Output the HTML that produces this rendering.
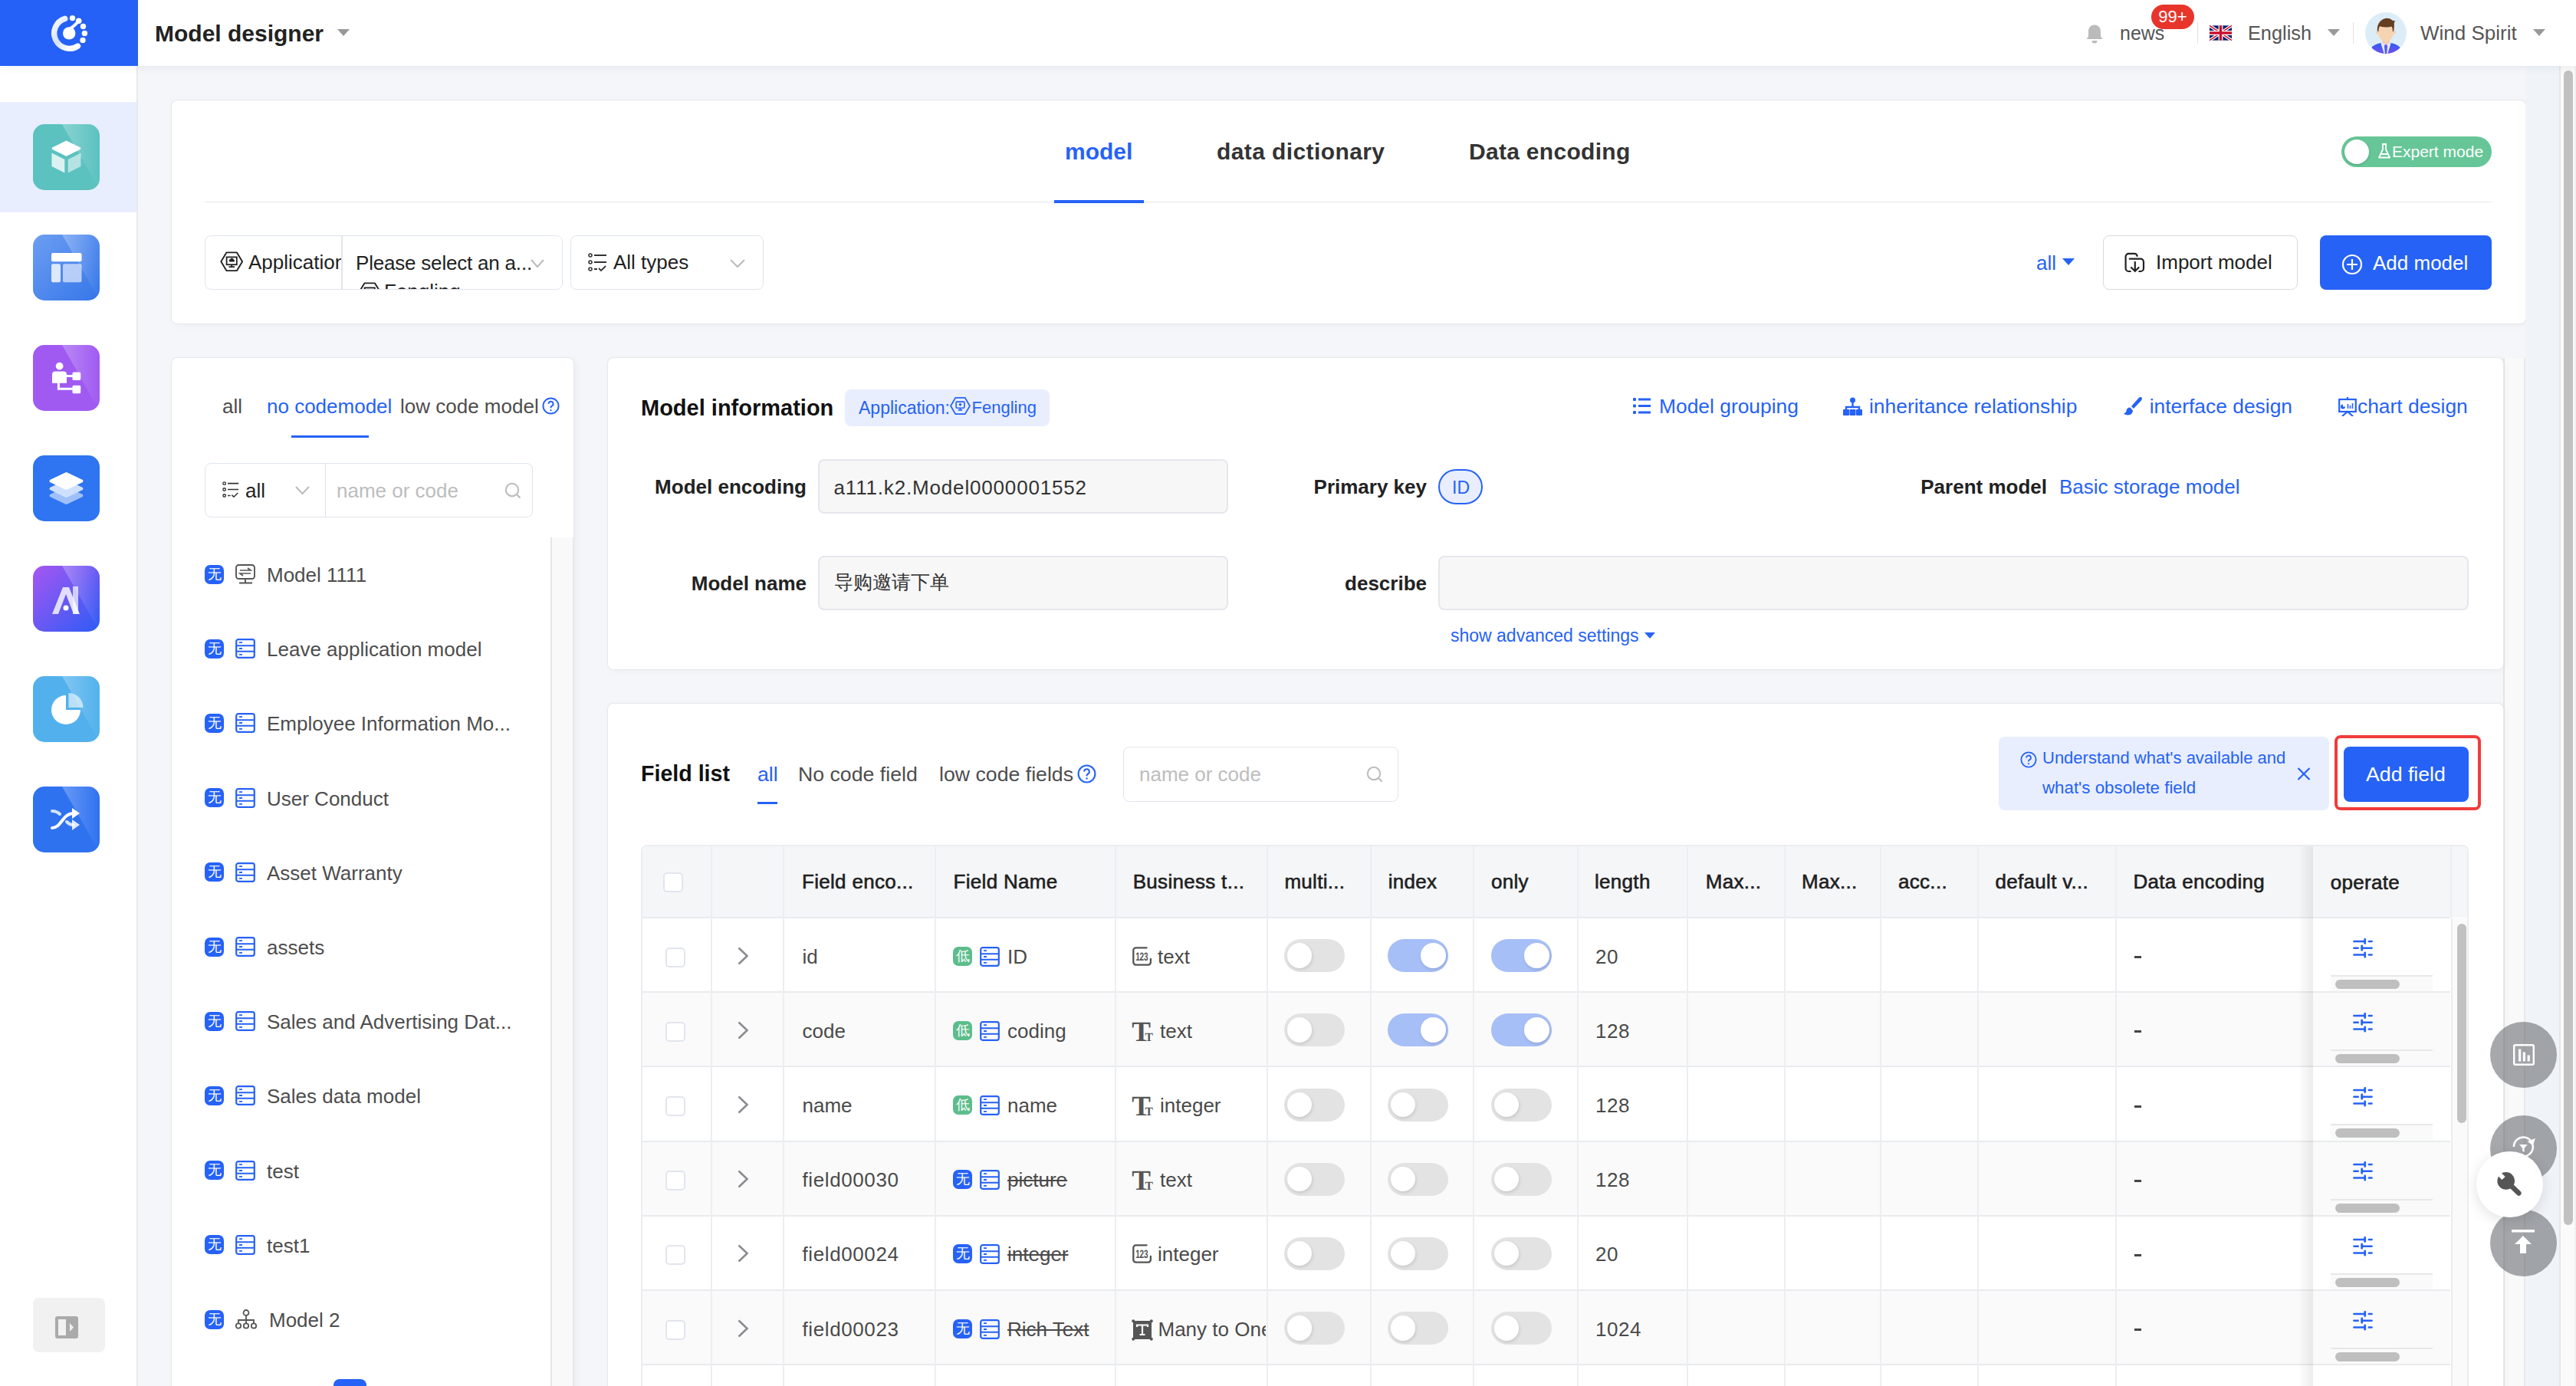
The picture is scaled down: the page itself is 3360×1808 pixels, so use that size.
<!DOCTYPE html>
<html><head><meta charset="utf-8">
<style>
*{box-sizing:border-box;margin:0;padding:0}
html,body{width:3360px;height:1808px;overflow:hidden;background:#f4f6f9;font-family:"Liberation Sans",sans-serif;color:#333}
.a{position:absolute}
.t{position:absolute;white-space:nowrap;line-height:1}
.blue{color:#2662f6}
svg{display:block}
</style></head><body>

<!-- HEADER -->
<div class="a" style="left:0;top:0;width:3360px;height:86px;background:#fff;box-shadow:0 3px 10px rgba(20,30,60,.06);z-index:5">
  <div class="a" style="left:0;top:0;width:180px;height:86px;background:#2561f6">
    <svg class="a" style="left:0;top:0" width="180" height="86" viewBox="0 0 180 86">
      <defs><linearGradient id="lg1" x1="0" y1="0" x2="1" y2="1"><stop offset="0" stop-color="#fff"/><stop offset=".45" stop-color="#d3e0fc"/><stop offset=".8" stop-color="#fff"/></linearGradient></defs>
      <path d="M84.78 24.37 A19.9 19.9 0 1 0 101.44 60.09" fill="none" stroke="url(#lg1)" stroke-width="7.4" stroke-linecap="round"/>
      <circle cx="90.2" cy="43.4" r="8.2" fill="#fff"/>
      <path d="M92 37 Q97 34 102.7 27.3" stroke="#fff" stroke-width="4" fill="none" stroke-linecap="round"/>
      <circle cx="102.7" cy="27.3" r="3.8" fill="#fff"/>
      <circle cx="94.5" cy="23.6" r="3.7" fill="#fff"/>
      <circle cx="108.5" cy="34.4" r="3.7" fill="#fff"/>
      <circle cx="110.4" cy="43.4" r="3.7" fill="#fff"/>
      <circle cx="108" cy="52.4" r="3.7" fill="#fff"/>
    </svg>
  </div>
  <div class="t" style="left:202px;top:29px;font-size:30px;font-weight:bold;color:#222">Model designer</div>
  <div class="a" style="left:440px;top:38px;width:0;height:0;border-left:8px solid transparent;border-right:8px solid transparent;border-top:9px solid #999"></div>

  <!-- right header -->
  <svg class="a" style="left:2720px;top:31px" width="24" height="26" viewBox="0 0 24 26"><path d="M12 1.5c-5 0-8 3.8-8 8.5v6.5L1.5 20h21L20 16.5V10c0-4.7-3-8.5-8-8.5z" fill="#bbb"/><path d="M8.5 22a3.5 3.5 0 0 0 7 0z" fill="#bbb"/></svg>
  <div class="t" style="left:2765px;top:30.8px;font-size:25px;color:#555">news</div>
  <div class="a" style="left:2806px;top:6px;width:56px;height:32px;border-radius:16px;background:#e8352c;color:#fff;font-size:22px;line-height:32px;text-align:center">99+</div>
  <div class="a" style="left:2866px;top:29px;width:1px;height:28px;background:#e2e2e2"></div>
  <svg class="a" style="left:2882px;top:33px" width="29" height="20" viewBox="0 0 60 40">
    <rect width="60" height="40" fill="#012169"/>
    <path d="M0 0L60 40M60 0L0 40" stroke="#fff" stroke-width="8"/>
    <path d="M0 0L60 40M60 0L0 40" stroke="#C8102E" stroke-width="3"/>
    <path d="M30 0v40M0 20h60" stroke="#fff" stroke-width="12"/>
    <path d="M30 0v40M0 20h60" stroke="#C8102E" stroke-width="7"/>
  </svg>
  <div class="t" style="left:2932px;top:30.6px;font-size:25.3px;color:#555">English</div>
  <div class="a" style="left:3036px;top:38px;width:0;height:0;border-left:8px solid transparent;border-right:8px solid transparent;border-top:9px solid #999"></div>
  <div class="a" style="left:3069px;top:29px;width:1px;height:28px;background:#e2e2e2"></div>
  <svg class="a" style="left:3085px;top:16px" width="54" height="54" viewBox="0 0 54 54">
    <defs><clipPath id="avc"><circle cx="27" cy="27" r="27"/></clipPath>
    <linearGradient id="jk" x1="0" y1="0" x2="0" y2="1"><stop offset="0" stop-color="#2c5cf2"/><stop offset="1" stop-color="#7d4df0"/></linearGradient></defs>
    <circle cx="27" cy="27" r="27" fill="#dcedf7"/>
    <g clip-path="url(#avc)">
      <path d="M8.5 46c3-4 9-5.5 13.5-6l5 2 5-2c4.5.5 10.5 2 13.5 6l-2 10H10z" fill="url(#jk)"/>
      <path d="M22 39.5l5 2.5 5-2.5 1.5 1.2-4 13h-5l-4-13z" fill="#e8e8ee"/>
      <path d="M26 42.5h2l1 2-1 10h-2l-1-10z" fill="#4a5cf2"/>
      <path d="M25.8 42.3h2.4l.6 2h-3.6z" fill="#7b4ff0"/>
      <rect x="22.3" y="35" width="9.6" height="6" rx="2" fill="#f2cda9"/>
      <ellipse cx="15.8" cy="26.3" rx="1.6" ry="2.3" fill="#f3cfac"/>
      <ellipse cx="38.2" cy="26.3" rx="1.6" ry="2.3" fill="#f3cfac"/>
      <path d="M17.3 20c0-3 4-4.5 9.7-4.5s9.7 1.5 9.7 4.5v8c0 5-5 10.5-9.7 10.5S17.3 33 17.3 28z" fill="#f5d4b3"/>
      <path d="M16 24.8c-1-7 2-13.5 8.5-16.3 4-1.6 9 -.3 11 2.3 1.5 0 3 .3 4 1.3-1 .3-1.7 1-1.7 1.8.3 3.3 0 7.3-.7 11h-1.3c.2-2.5-.3-5-1.5-6.3-4 1.5-10 1.2-15.3-.3-1.2 2-1.6 4.5-1.5 6.8z" fill="#653f22"/>
    </g>
  </svg>
  <div class="t" style="left:3157px;top:30px;font-size:26px;color:#555">Wind Spirit</div>
  <div class="a" style="left:3304px;top:38px;width:0;height:0;border-left:8px solid transparent;border-right:8px solid transparent;border-top:9px solid #999"></div>
</div>

<!-- SIDEBAR -->
<div class="a" style="left:0;top:86px;width:180px;height:1722px;background:#fff;border-right:2px solid #e6e9ee;z-index:2">
  <div class="a" style="left:0;top:47px;width:178px;height:144px;background:#e8eefd"></div>
  <!-- tile 1 cube -->
  <svg class="a" style="left:43px;top:76px" width="87" height="86" viewBox="0 0 87 86">
    <defs><clipPath id="tc"><rect width="87" height="86" rx="15"/></clipPath>
    <linearGradient id="sh" x1="0" y1="0" x2="1" y2="0"><stop offset="0" stop-color="#fff" stop-opacity=".28"/><stop offset="1" stop-color="#fff" stop-opacity="0"/></linearGradient></defs>
    <g clip-path="url(#tc)"><rect width="87" height="86" fill="#5bc2c0"/><path d="M38 0H87V86z" fill="url(#sh)"/></g>
    <path d="M43.5 23l17.3 8.6-17.3 8.6-17.3-8.6z" fill="#fff" stroke="#fff" stroke-width="3" stroke-linejoin="round"/>
    <path d="M24.5 37.5l16.8 8.4v17.6l-16.8-8.4z" fill="#fff" fill-opacity=".78"/>
    <path d="M62.5 37.5l-16.8 8.4v17.6l16.8-8.4z" fill="#fff" fill-opacity=".55"/>
  </svg>
  <!-- tile 2 layout -->
  <svg class="a" style="left:43px;top:220px" width="87" height="86" viewBox="0 0 87 86">
    <defs><clipPath id="tc2"><rect width="87" height="86" rx="15"/></clipPath>
    <linearGradient id="g2" x1="0" y1="0" x2="1" y2="1"><stop offset="0" stop-color="#6c9ef2"/><stop offset="1" stop-color="#3576e9"/></linearGradient></defs>
    <g clip-path="url(#tc2)"><rect width="87" height="86" fill="url(#g2)"/><path d="M38 0H87V86z" fill="url(#sh)"/></g>
    <rect x="24" y="24" width="39.5" height="11.2" rx="2" fill="#fff"/>
    <rect x="24" y="38.3" width="12" height="24" rx="2" fill="#fff" fill-opacity=".8"/>
    <rect x="39" y="38.3" width="24.5" height="24" rx="2" fill="#fff" fill-opacity=".6"/>
  </svg>
  <!-- tile 3 org -->
  <svg class="a" style="left:43px;top:364px" width="87" height="86" viewBox="0 0 87 86">
    <defs><clipPath id="tc3"><rect width="87" height="86" rx="15"/></clipPath></defs>
    <g clip-path="url(#tc3)"><rect width="87" height="86" fill="#a05af2"/><path d="M38 0H87V86z" fill="url(#sh)"/></g>
    <circle cx="34.6" cy="27.6" r="4.9" fill="#fff"/>
    <path d="M25 49.7V38.5a4 4 0 0 1 4-4h11a4 4 0 0 1 4 4v11.2z" fill="#fff"/>
    <path d="M44 40.6h8M33.4 49v8.3h18.5" stroke="#fff" stroke-width="3" fill="none"/>
    <rect x="51.5" y="35.5" width="10.7" height="10.5" rx="1.5" fill="#fff"/>
    <rect x="51.5" y="52.7" width="10.7" height="10.6" rx="1.5" fill="#fff"/>
  </svg>
  <!-- tile 4 layers -->
  <svg class="a" style="left:43px;top:508px" width="87" height="86" viewBox="0 0 87 86">
    <defs><clipPath id="tc4"><rect width="87" height="86" rx="15"/></clipPath></defs>
    <g clip-path="url(#tc4)"><rect width="87" height="86" fill="#2f74f0"/></g>
    <path d="M43.5 43l20 9.5-20 9.5-20-9.5z" fill="#9fc0f9" stroke="#9fc0f9" stroke-width="4" stroke-linejoin="round"/>
    <path d="M43.5 34l20 9.5-20 9.5-20-9.5z" fill="#cfe0fd" stroke="#cfe0fd" stroke-width="4" stroke-linejoin="round"/>
    <path d="M43.5 24l20 9.5-20 9.5-20-9.5z" fill="#fff" stroke="#fff" stroke-width="4" stroke-linejoin="round"/>
  </svg>
  <!-- tile 5 A -->
  <svg class="a" style="left:43px;top:652px" width="87" height="86" viewBox="0 0 87 86">
    <defs><clipPath id="tc5"><rect width="87" height="86" rx="15"/></clipPath>
    <linearGradient id="g5" x1="0" y1="0" x2="1" y2="1"><stop offset="0" stop-color="#a656f2"/><stop offset="1" stop-color="#2d5cf5"/></linearGradient></defs>
    <g clip-path="url(#tc5)"><rect width="87" height="86" fill="url(#g5)"/><path d="M38 0H87V86z" fill="url(#sh)"/></g>
    <path d="M25 63l14-35h8l14 35h-8l-10-26-10 26z" fill="#fff" fill-opacity=".8"/>
    <rect x="52" y="27" width="7" height="36" fill="#fff" fill-opacity=".7"/>
    <circle cx="43" cy="55" r="3.5" fill="#fff"/>
  </svg>
  <!-- tile 6 pie -->
  <svg class="a" style="left:43px;top:796px" width="87" height="86" viewBox="0 0 87 86">
    <defs><clipPath id="tc6"><rect width="87" height="86" rx="15"/></clipPath></defs>
    <g clip-path="url(#tc6)"><rect width="87" height="86" fill="#52b1ed"/><path d="M38 0H87V86z" fill="url(#sh)"/></g>
    <path d="M43 25A19 19 0 1 0 62 44H43z" fill="#fff"/>
    <path d="M46.5 22A19 19 0 0 1 65.5 41H46.5z" fill="#fff" fill-opacity=".6"/>
  </svg>
  <!-- tile 7 shuffle -->
  <svg class="a" style="left:43px;top:940px" width="87" height="86" viewBox="0 0 87 86">
    <defs><clipPath id="tc7"><rect width="87" height="86" rx="15"/></clipPath></defs>
    <g clip-path="url(#tc7)"><rect width="87" height="86" fill="#2f72f0"/><path d="M38 0H87V86z" fill="url(#sh)"/></g>
    <path d="M25 32c5 0 8 2 10 4" stroke="#fff" stroke-opacity=".8" stroke-width="4" fill="none" stroke-linecap="round"/>
    <path d="M25 54c12 0 13-18 27-19" stroke="#fff" stroke-width="4" fill="none" stroke-linecap="round"/>
    <path d="M51 28l10 7-10 7z" fill="#fff"/>
    <path d="M44 46c3 3 6 4 8 4" stroke="#fff" stroke-opacity=".8" stroke-width="4" fill="none" stroke-linecap="round"/>
    <path d="M51 43l10 7-10 7z" fill="#fff" fill-opacity=".85"/>
  </svg>
  <!-- bottom toggle -->
  <div class="a" style="left:43px;top:1607px;width:94px;height:71px;border-radius:8px;background:#f1f1f1"></div>
  <svg class="a" style="left:72px;top:1631px" width="30" height="29" viewBox="0 0 30 29">
    <rect x="0" y="0" width="30" height="29" rx="3" fill="#aaa"/>
    <rect x="4" y="4" width="10" height="21" fill="#f1f1f1"/>
    <path d="M19 9l5 5.5-5 5.5z" fill="#f1f1f1"/>
  </svg>
</div>


<!-- TOP CARD -->
<div class="a" style="left:224px;top:130.5px;width:3070px;height:291.5px;background:#fff;border-radius:7px;box-shadow:0 0 0 1px #e4e8ee,2px 2px 10px rgba(20,30,60,.04)">
  <div class="t" style="left:1165px;top:52.6px;font-size:30px;font-weight:bold;color:#2662f6">model</div>
  <div class="t" style="left:1363px;top:52.6px;font-size:30px;font-weight:bold;color:#333;letter-spacing:.4px">data dictionary</div>
  <div class="t" style="left:1692px;top:52.6px;font-size:30px;font-weight:bold;color:#333;letter-spacing:.3px">Data encoding</div>
  <div class="a" style="left:43px;top:132px;width:2983px;height:1.5px;background:#e3e5e9"></div>
  <div class="a" style="left:1151px;top:130px;width:117px;height:4px;background:#2662f6"></div>
  <!-- expert toggle -->
  <div class="a" style="left:2830px;top:47px;width:196px;height:40px;border-radius:20px;background:#66c697"></div>
  <div class="a" style="left:2834px;top:51px;width:32px;height:32px;border-radius:16px;background:#fff;box-shadow:0 1px 3px rgba(0,0,0,.2)"></div>
  <svg class="a" style="left:2877px;top:55px" width="18" height="22" viewBox="0 0 18 22"><path d="M6 2h6M7 2v7L2 19.5h14L11 9V2M4.5 15h9" stroke="#fff" stroke-width="1.8" fill="none" stroke-linejoin="round"/></svg>
  <div class="t" style="left:2896px;top:56px;font-size:21px;color:#fff">Expert mode</div>
  <!-- selectors -->
  <div class="a" style="left:43px;top:176px;width:467px;height:71px;border:1.5px solid #e0e4ec;border-radius:8px;overflow:hidden">
    <svg class="a" style="left:19px;top:20px" width="31" height="27" viewBox="0 0 31 27"><path d="M1.3 13.2L8.4 1.4H22L29.1 13.2L22 25.1H8.4z" fill="none" stroke="#222" stroke-width="1.9" stroke-linejoin="round"/><rect x="8.6" y="7.4" width="13.2" height="9.8" fill="none" stroke="#222" stroke-width="1.8"/><path d="M15.2 17.2v2M11.5 20.2h7.5" stroke="#222" stroke-width="1.8"/><path d="M12.6 13.6a2 2 0 0 1 .8-3.5 2.3 2.3 0 0 1 4.3.3 1.7 1.7 0 0 1 .4 3.2z" fill="#222"/></svg>
    <div class="t" style="left:56px;top:21px;font-size:26px;color:#222">Application</div>
    <div class="a" style="left:177px;top:0;width:1.5px;height:71px;background:#e0e4ec"></div>
    <div class="a" style="left:179px;top:0;width:290px;height:71px;background:#fff"></div>
    <div class="t" style="left:196px;top:22px;font-size:26px;color:#222;letter-spacing:-.2px">Please select an a...</div>
    <svg class="a" style="left:424px;top:30px" width="18" height="12" viewBox="0 0 18 12"><path d="M1 1l8 9 8-9" stroke="#bbb" stroke-width="2" fill="none"/></svg>
    <svg class="a" style="left:199px;top:60px" width="31" height="27" viewBox="0 0 31 27"><path d="M1.3 13.2L8.4 1.4H22L29.1 13.2L22 25.1H8.4z" fill="none" stroke="#222" stroke-width="1.9" stroke-linejoin="round"/><rect x="8.6" y="7.4" width="13.2" height="9.8" fill="none" stroke="#222" stroke-width="1.8"/></svg>
    <div class="t" style="left:233px;top:59px;font-size:26px;color:#222">Fengling</div>
  </div>
  <div class="a" style="left:520px;top:176px;width:252px;height:71px;border:1.5px solid #e0e4ec;border-radius:8px">
    <svg class="a" style="left:22px;top:22px" width="25" height="25" viewBox="0 0 25 25"><circle cx="3" cy="3" r="2" fill="none" stroke="#333" stroke-width="1.6"/><circle cx="3" cy="12" r="2" fill="none" stroke="#333" stroke-width="1.6"/><circle cx="3" cy="21" r="2" fill="none" stroke="#333" stroke-width="1.6"/><path d="M8 3h16M8 12h16M8 21h4M14 20l3 3 6-6" stroke="#333" stroke-width="1.8" fill="none"/></svg>
    <div class="t" style="left:55px;top:21px;font-size:26px;color:#222">All types</div>
    <svg class="a" style="left:207px;top:30px" width="20" height="12" viewBox="0 0 20 12"><path d="M1 1l9 9 9-9" stroke="#bbb" stroke-width="2" fill="none"/></svg>
  </div>
  <!-- right actions -->
  <div class="t" style="left:2432px;top:199px;font-size:26px;color:#2662f6">all</div>
  <div class="a" style="left:2466px;top:206px;width:0;height:0;border-left:8px solid transparent;border-right:8px solid transparent;border-top:9px solid #2662f6"></div>
  <div class="a" style="left:2519px;top:176px;width:254px;height:71px;border:1.5px solid #d9d9d9;border-radius:8px;background:#fff">
    <svg class="a" style="left:25px;top:20px" width="30" height="30" viewBox="0 0 30 30"><path d="M18.6 5.8Q18 2.8 15 2.8H7.6A4 4 0 0 0 3.6 6.8V22A4 4 0 0 0 7.6 26H9.8" fill="none" stroke="#222" stroke-width="2.2" stroke-linecap="round"/><path d="M8.8 9.7H23A4 4 0 0 1 27 13.7V22A4 4 0 0 1 23 26H21.3" fill="none" stroke="#222" stroke-width="2.2" stroke-linecap="round"/><path d="M15.8 13.8V25M11 21L15.8 25.8L20.6 21" fill="none" stroke="#222" stroke-width="2.2" stroke-linecap="round"/></svg>
    <div class="t" style="left:68px;top:21px;font-size:26px;color:#222">Import model</div>
  </div>
  <div class="a" style="left:2802px;top:176px;width:224px;height:71px;border-radius:8px;background:#2662f6">
    <svg class="a" style="left:28px;top:24px" width="28" height="28" viewBox="0 0 28 28"><circle cx="14" cy="14" r="12" stroke="#fff" stroke-width="2.2" fill="none"/><path d="M14 7v14M7 14h14" stroke="#fff" stroke-width="2.2"/></svg>
    <div class="t" style="left:69px;top:23.5px;font-size:26px;color:#fff">Add model</div>
  </div>
</div>


<!-- LEFT CARD -->
<div class="a" style="left:224px;top:467px;width:524px;height:1400px;background:#fff;border-radius:7px;box-shadow:0 0 0 1px #e4e8ee,3px 2px 10px rgba(20,30,60,.05)"></div>
<div class="a" style="left:718px;top:701px;width:30.5px;height:1107px;background:#f9f9f9;border-left:2.5px solid #e6e6e6;border-right:2px solid #e9e9e9"></div>
<div class="a" style="left:0;top:0;width:0;height:0">
  <div class="t" style="left:290px;top:517.4px;font-size:26px;color:#4d4d4d">all</div>
  <div class="t" style="left:348px;top:517.4px;font-size:26px;color:#2662f6">no codemodel</div>
  <div class="t" style="left:522px;top:517.4px;font-size:26px;color:#4d4d4d">low code model</div>
  <svg class="a" style="left:707px;top:518px" width="23" height="23" viewBox="0 0 24 24"><circle cx="12" cy="12" r="10.5" fill="none" stroke="#2662f6" stroke-width="2"/><path d="M8.8 9.2a3.2 3.2 0 1 1 4.4 3c-.9.4-1.2 1-1.2 2v.6" stroke="#2662f6" stroke-width="2" fill="none"/><circle cx="12" cy="17.8" r="1.2" fill="#2662f6"/></svg>
  <div class="a" style="left:380px;top:568px;width:101px;height:3px;background:#2662f6"></div>
  <div class="a" style="left:267px;top:604px;width:428px;height:71px;border:1.5px solid #e0e4ec;border-radius:8px"></div>
  <div class="a" style="left:423.5px;top:604px;width:1.5px;height:71px;background:#e0e4ec"></div>
  <svg class="a" style="left:290px;top:628px" width="22" height="22" viewBox="0 0 25 25"><circle cx="3" cy="3" r="2" fill="none" stroke="#333" stroke-width="1.6"/><circle cx="3" cy="12" r="2" fill="none" stroke="#333" stroke-width="1.6"/><circle cx="3" cy="21" r="2" fill="none" stroke="#333" stroke-width="1.6"/><path d="M8 3h16M8 12h16M8 21h4M14 20l3 3 6-6" stroke="#333" stroke-width="1.8" fill="none"/></svg>
  <div class="t" style="left:320px;top:626.6px;font-size:26px;color:#222">all</div>
  <svg class="a" style="left:385px;top:634px" width="19" height="12" viewBox="0 0 19 12"><path d="M1 1l8.5 9 8.5-9" stroke="#bbb" stroke-width="2" fill="none"/></svg>
  <div class="t" style="left:439px;top:626.6px;font-size:26px;color:#bdbdbd">name or code</div>
  <svg class="a" style="left:658px;top:629px" width="23" height="22" viewBox="0 0 23 22"><circle cx="10" cy="10" r="8.2" fill="none" stroke="#bbb" stroke-width="2"/><path d="M16.5 16.5l4 4" stroke="#bbb" stroke-width="2.2"/></svg>
  <div class="a" style="left:267px;top:736.5px;width:25px;height:25px;border-radius:7px;background:#2662f6;color:#fff;font-size:18px;line-height:25px;text-align:center">无</div>
  <svg class="a" style="left:307px;top:736.0px" width="26" height="26" viewBox="0 0 26 26"><rect x="1" y="1" width="24" height="18" rx="3.5" fill="none" stroke="#555" stroke-width="1.9"/><path d="M13 19v5M5 24.5h17" stroke="#555" stroke-width="1.9"/><path d="M6 8h14l-4-3M20 12H6l4 3" stroke="#555" stroke-width="1.7" fill="none"/></svg>
  <div class="t" style="left:348px;top:737.0px;font-size:26px;color:#4d4d4d">Model 1111</div>
  <div class="a" style="left:267px;top:833.7px;width:25px;height:25px;border-radius:7px;background:#2662f6;color:#fff;font-size:18px;line-height:25px;text-align:center">无</div>
  <svg class="a" style="left:307px;top:833.2px" width="26" height="26" viewBox="0 0 26 26"><rect x="1.2" y="1.2" width="23.6" height="23.6" rx="2.5" fill="none" stroke="#2662f6" stroke-width="2.2"/><path d="M1.5 9.3h23M1.5 16.8h23" stroke="#2662f6" stroke-width="2"/><path d="M5 5.2h4M5 13h4M5 20.8h4" stroke="#2662f6" stroke-width="1.8"/></svg>
  <div class="t" style="left:348px;top:834.2px;font-size:26px;color:#4d4d4d">Leave application model</div>
  <div class="a" style="left:267px;top:930.9px;width:25px;height:25px;border-radius:7px;background:#2662f6;color:#fff;font-size:18px;line-height:25px;text-align:center">无</div>
  <svg class="a" style="left:307px;top:930.4px" width="26" height="26" viewBox="0 0 26 26"><rect x="1.2" y="1.2" width="23.6" height="23.6" rx="2.5" fill="none" stroke="#2662f6" stroke-width="2.2"/><path d="M1.5 9.3h23M1.5 16.8h23" stroke="#2662f6" stroke-width="2"/><path d="M5 5.2h4M5 13h4M5 20.8h4" stroke="#2662f6" stroke-width="1.8"/></svg>
  <div class="t" style="left:348px;top:931.4px;font-size:26px;color:#4d4d4d">Employee Information Mo...</div>
  <div class="a" style="left:267px;top:1028.1px;width:25px;height:25px;border-radius:7px;background:#2662f6;color:#fff;font-size:18px;line-height:25px;text-align:center">无</div>
  <svg class="a" style="left:307px;top:1027.6px" width="26" height="26" viewBox="0 0 26 26"><rect x="1.2" y="1.2" width="23.6" height="23.6" rx="2.5" fill="none" stroke="#2662f6" stroke-width="2.2"/><path d="M1.5 9.3h23M1.5 16.8h23" stroke="#2662f6" stroke-width="2"/><path d="M5 5.2h4M5 13h4M5 20.8h4" stroke="#2662f6" stroke-width="1.8"/></svg>
  <div class="t" style="left:348px;top:1028.6px;font-size:26px;color:#4d4d4d">User Conduct</div>
  <div class="a" style="left:267px;top:1125.3px;width:25px;height:25px;border-radius:7px;background:#2662f6;color:#fff;font-size:18px;line-height:25px;text-align:center">无</div>
  <svg class="a" style="left:307px;top:1124.8px" width="26" height="26" viewBox="0 0 26 26"><rect x="1.2" y="1.2" width="23.6" height="23.6" rx="2.5" fill="none" stroke="#2662f6" stroke-width="2.2"/><path d="M1.5 9.3h23M1.5 16.8h23" stroke="#2662f6" stroke-width="2"/><path d="M5 5.2h4M5 13h4M5 20.8h4" stroke="#2662f6" stroke-width="1.8"/></svg>
  <div class="t" style="left:348px;top:1125.8px;font-size:26px;color:#4d4d4d">Asset Warranty</div>
  <div class="a" style="left:267px;top:1222.5px;width:25px;height:25px;border-radius:7px;background:#2662f6;color:#fff;font-size:18px;line-height:25px;text-align:center">无</div>
  <svg class="a" style="left:307px;top:1222.0px" width="26" height="26" viewBox="0 0 26 26"><rect x="1.2" y="1.2" width="23.6" height="23.6" rx="2.5" fill="none" stroke="#2662f6" stroke-width="2.2"/><path d="M1.5 9.3h23M1.5 16.8h23" stroke="#2662f6" stroke-width="2"/><path d="M5 5.2h4M5 13h4M5 20.8h4" stroke="#2662f6" stroke-width="1.8"/></svg>
  <div class="t" style="left:348px;top:1223.0px;font-size:26px;color:#4d4d4d">assets</div>
  <div class="a" style="left:267px;top:1319.7px;width:25px;height:25px;border-radius:7px;background:#2662f6;color:#fff;font-size:18px;line-height:25px;text-align:center">无</div>
  <svg class="a" style="left:307px;top:1319.2px" width="26" height="26" viewBox="0 0 26 26"><rect x="1.2" y="1.2" width="23.6" height="23.6" rx="2.5" fill="none" stroke="#2662f6" stroke-width="2.2"/><path d="M1.5 9.3h23M1.5 16.8h23" stroke="#2662f6" stroke-width="2"/><path d="M5 5.2h4M5 13h4M5 20.8h4" stroke="#2662f6" stroke-width="1.8"/></svg>
  <div class="t" style="left:348px;top:1320.2px;font-size:26px;color:#4d4d4d">Sales and Advertising Dat...</div>
  <div class="a" style="left:267px;top:1416.9px;width:25px;height:25px;border-radius:7px;background:#2662f6;color:#fff;font-size:18px;line-height:25px;text-align:center">无</div>
  <svg class="a" style="left:307px;top:1416.4px" width="26" height="26" viewBox="0 0 26 26"><rect x="1.2" y="1.2" width="23.6" height="23.6" rx="2.5" fill="none" stroke="#2662f6" stroke-width="2.2"/><path d="M1.5 9.3h23M1.5 16.8h23" stroke="#2662f6" stroke-width="2"/><path d="M5 5.2h4M5 13h4M5 20.8h4" stroke="#2662f6" stroke-width="1.8"/></svg>
  <div class="t" style="left:348px;top:1417.4px;font-size:26px;color:#4d4d4d">Sales data model</div>
  <div class="a" style="left:267px;top:1514.1px;width:25px;height:25px;border-radius:7px;background:#2662f6;color:#fff;font-size:18px;line-height:25px;text-align:center">无</div>
  <svg class="a" style="left:307px;top:1513.6px" width="26" height="26" viewBox="0 0 26 26"><rect x="1.2" y="1.2" width="23.6" height="23.6" rx="2.5" fill="none" stroke="#2662f6" stroke-width="2.2"/><path d="M1.5 9.3h23M1.5 16.8h23" stroke="#2662f6" stroke-width="2"/><path d="M5 5.2h4M5 13h4M5 20.8h4" stroke="#2662f6" stroke-width="1.8"/></svg>
  <div class="t" style="left:348px;top:1514.6px;font-size:26px;color:#4d4d4d">test</div>
  <div class="a" style="left:267px;top:1611.3px;width:25px;height:25px;border-radius:7px;background:#2662f6;color:#fff;font-size:18px;line-height:25px;text-align:center">无</div>
  <svg class="a" style="left:307px;top:1610.8px" width="26" height="26" viewBox="0 0 26 26"><rect x="1.2" y="1.2" width="23.6" height="23.6" rx="2.5" fill="none" stroke="#2662f6" stroke-width="2.2"/><path d="M1.5 9.3h23M1.5 16.8h23" stroke="#2662f6" stroke-width="2"/><path d="M5 5.2h4M5 13h4M5 20.8h4" stroke="#2662f6" stroke-width="1.8"/></svg>
  <div class="t" style="left:348px;top:1611.8px;font-size:26px;color:#4d4d4d">test1</div>
  <div class="a" style="left:267px;top:1708.5px;width:25px;height:25px;border-radius:7px;background:#2662f6;color:#fff;font-size:18px;line-height:25px;text-align:center">无</div>
  <svg class="a" style="left:307px;top:1708.0px" width="28" height="26" viewBox="0 0 28 26"><circle cx="14" cy="4.5" r="3.5" fill="none" stroke="#555" stroke-width="1.8"/><circle cx="4" cy="21.5" r="3.2" fill="none" stroke="#555" stroke-width="1.8"/><circle cx="14" cy="21.5" r="3.2" fill="none" stroke="#555" stroke-width="1.8"/><circle cx="24" cy="21.5" r="3.2" fill="none" stroke="#555" stroke-width="1.8"/><path d="M14 8v10M4 18v-4h20v4" stroke="#555" stroke-width="1.8" fill="none"/></svg>
  <div class="t" style="left:351px;top:1709.0px;font-size:26px;color:#4d4d4d">Model 2</div>
  <div class="a" style="left:435px;top:1799px;width:43px;height:20px;border-radius:8px 8px 0 0;background:#2662f6"></div>
</div>


<!-- RIGHT STRIP -->
<div class="a" style="left:3264.5px;top:466.5px;width:29.5px;height:1341.5px;background:#f9f9f9;border-left:2.5px solid #e6e6e6;border-right:2px solid #e9e9e9"></div>
<!-- MODEL INFO CARD -->
<div class="a" style="left:792.5px;top:467px;width:2472.5px;height:406px;background:#fff;border-radius:7px;box-shadow:0 0 0 1px #e4e8ee,2px 2px 10px rgba(20,30,60,.04)"></div>
<div class="a" style="left:0;top:0;width:0;height:0">
  <div class="t" style="left:836px;top:517.7px;font-size:29px;font-weight:bold;color:#111">Model information</div>
  <div class="a" style="left:1102px;top:508px;width:267px;height:48px;border-radius:8px;background:#e8eefd"></div>
  <div class="t" style="left:1120px;top:520.5px;font-size:23px;color:#2662f6">Application:</div>
  <svg class="a" style="left:1239px;top:517px" width="27" height="25" viewBox="0 0 30 28"><path d="M8 2h14l7 12-7 12H8L1 14z" fill="none" stroke="#2662f6" stroke-width="2"/><rect x="9" y="8" width="12" height="9" rx="1" fill="none" stroke="#2662f6" stroke-width="1.8"/><path d="M12 20h6M15 17v3" stroke="#2662f6" stroke-width="1.8"/><circle cx="15" cy="12" r="2" fill="#2662f6"/></svg>
  <div class="t" style="left:1267.5px;top:521.4px;font-size:22px;color:#2662f6">Fengling</div>

  <svg class="a" style="left:2130px;top:519px" width="23" height="21" viewBox="0 0 23 21"><rect x="0" y="0" width="4" height="4" rx="1" fill="#2662f6"/><rect x="0" y="8.5" width="4" height="4" rx="1" fill="#2662f6"/><rect x="0" y="17" width="4" height="4" rx="1" fill="#2662f6"/><path d="M7 2h16M7 10.5h16M7 19h16" stroke="#2662f6" stroke-width="3"/></svg>
  <div class="t" style="left:2164px;top:516.7px;font-size:26.4px;color:#2662f6">Model grouping</div>
  <svg class="a" style="left:2404px;top:518px" width="25" height="24" viewBox="0 0 25 24"><circle cx="12.5" cy="4" r="3.5" fill="#2662f6"/><path d="M12.5 7v6M4 17v-4h17v4" stroke="#2662f6" stroke-width="2.4" fill="none"/><rect x="0" y="16" width="8" height="8" rx="1" fill="#2662f6"/><rect x="8.5" y="16" width="8" height="8" rx="1" fill="#2662f6"/><rect x="17" y="16" width="8" height="8" rx="1" fill="#2662f6"/></svg>
  <div class="t" style="left:2438px;top:516.7px;font-size:26.4px;color:#2662f6">inheritance relationship</div>
  <svg class="a" style="left:2768px;top:517px" width="27" height="25" viewBox="0 0 27 25"><path d="M25.5 1.5c-1.5-1-3-.3-4 .8L12 13l3 3 9.7-10.3c1-1 1.8-2.7.8-4.2z" fill="#2662f6"/><path d="M10.5 14.5c-3 0-5 2-5 4.5 0 1.5-1.3 2.8-3.5 3.3 1.5 1.6 3.5 2.2 5.5 2.2 4 0 6.5-3 6.5-6z" fill="#2662f6"/></svg>
  <div class="t" style="left:2803.7px;top:516.7px;font-size:26.4px;color:#2662f6">interface design</div>
  <svg class="a" style="left:3050px;top:518px" width="24" height="25" viewBox="0 0 24 25"><rect x="1.2" y="3" width="21.6" height="16" fill="none" stroke="#2662f6" stroke-width="2.2"/><path d="M12 0v3M5 25l7-6 7 6" stroke="#2662f6" stroke-width="2.2" fill="none"/><path d="M6 9.5a3 3 0 1 0 3 3H6z" fill="#2662f6"/><path d="M12.5 15v-6M15.5 15v-4M18.5 15v-7" stroke="#2662f6" stroke-width="1.6"/></svg>
  <div class="t" style="left:3075px;top:516.7px;font-size:26.4px;color:#2662f6">chart design</div>

  <div class="t" style="left:852px;top:622px;width:200px;text-align:right;font-size:26px;font-weight:bold;color:#222">Model encoding</div>
  <div class="a" style="left:1067px;top:599px;width:535px;height:71px;border:2px solid #e5e7ec;border-radius:8px;background:#f7f7f7"></div>
  <div class="t" style="left:1087.5px;top:623px;font-size:26px;color:#333;letter-spacing:.83px">a111.k2.Model0000001552</div>
  <div class="t" style="left:1661px;top:622px;width:200px;text-align:right;font-size:26px;font-weight:bold;color:#222">Primary key</div>
  <div class="a" style="left:1876px;top:612px;width:58px;height:46px;border:2px solid #2662f6;border-radius:23px;background:#e8eefd"></div>
  <div class="t" style="left:1894px;top:624.5px;font-size:23px;color:#2662f6">ID</div>
  <div class="t" style="left:2470px;top:622px;width:200px;text-align:right;font-size:26px;font-weight:bold;color:#222">Parent model</div>
  <div class="t" style="left:2686px;top:622px;font-size:26px;color:#2662f6">Basic storage model</div>

  <div class="t" style="left:852px;top:748px;width:200px;text-align:right;font-size:26px;font-weight:bold;color:#222">Model name</div>
  <div class="a" style="left:1067px;top:725px;width:535px;height:71px;border:2px solid #e5e7ec;border-radius:8px;background:#f7f7f7"></div>
  <div class="t" style="left:1088px;top:748px;font-size:24.8px;color:#333">导购邀请下单</div>
  <div class="t" style="left:1661px;top:748px;width:200px;text-align:right;font-size:26px;font-weight:bold;color:#222">describe</div>
  <div class="a" style="left:1876px;top:725px;width:1344px;height:71px;border:2px solid #e5e7ec;border-radius:8px;background:#f7f7f7"></div>
  <div class="t" style="left:1892px;top:818.2px;font-size:23px;color:#2662f6">show advanced settings</div>
  <div class="a" style="left:2145px;top:825px;width:0;height:0;border-left:7.5px solid transparent;border-right:7.5px solid transparent;border-top:8px solid #2662f6"></div>
</div>


<!-- FIELD LIST CARD -->
<div class="a" style="left:792.5px;top:918px;width:2472.5px;height:1000px;background:#fff;border-radius:7px;box-shadow:0 0 0 1px #e4e8ee,2px 2px 10px rgba(20,30,60,.04)"></div>
<div class="a" style="left:0;top:0;width:0;height:0">
  <div class="t" style="left:836px;top:995px;font-size:28.6px;font-weight:bold;color:#111">Field list</div>
  <div class="t" style="left:988px;top:997.2px;font-size:26.7px;color:#2662f6">all</div>
  <div class="t" style="left:1041px;top:997.2px;font-size:26.7px;color:#4d4d4d">No code field</div>
  <div class="t" style="left:1225px;top:997.2px;font-size:26.7px;color:#4d4d4d">low code fields</div>
  <svg class="a" style="left:1405px;top:997px" width="25" height="25" viewBox="0 0 24 24"><circle cx="12" cy="12" r="10.5" fill="none" stroke="#2662f6" stroke-width="2"/><path d="M8.8 9.2a3.2 3.2 0 1 1 4.4 3c-.9.4-1.2 1-1.2 2v.6" stroke="#2662f6" stroke-width="2" fill="none"/><circle cx="12" cy="17.8" r="1.2" fill="#2662f6"/></svg>
  <div class="a" style="left:988px;top:1046px;width:26px;height:3px;background:#2662f6"></div>
  <div class="a" style="left:1465px;top:974px;width:359px;height:72px;border:1.5px solid #e0e4ec;border-radius:8px"></div>
  <div class="t" style="left:1486px;top:997px;font-size:26px;color:#bdbdbd">name or code</div>
  <svg class="a" style="left:1782px;top:999px" width="23" height="22" viewBox="0 0 23 22"><circle cx="10" cy="10" r="8.2" fill="none" stroke="#bbb" stroke-width="2"/><path d="M16.5 16.5l4 4" stroke="#bbb" stroke-width="2.2"/></svg>
  <div class="a" style="left:2607px;top:961px;width:431px;height:96px;border-radius:8px;background:#e8eefd"></div>
  <svg class="a" style="left:2635px;top:980px" width="22" height="22" viewBox="0 0 24 24"><circle cx="12" cy="12" r="10.5" fill="none" stroke="#2662f6" stroke-width="2"/><path d="M8.8 9.2a3.2 3.2 0 1 1 4.4 3c-.9.4-1.2 1-1.2 2v.6" stroke="#2662f6" stroke-width="2" fill="none"/><circle cx="12" cy="17.8" r="1.2" fill="#2662f6"/></svg>
  <div class="t" style="left:2664px;top:978.0px;font-size:22px;color:#2662f6">Understand what's available and</div>
  <div class="t" style="left:2664px;top:1017.0px;font-size:22.3px;color:#2662f6">what's obsolete field</div>
  <svg class="a" style="left:2996px;top:1001px" width="18" height="17" viewBox="0 0 18 17"><path d="M1.5 1l15 15M16.5 1l-15 15" stroke="#2662f6" stroke-width="2.2"/></svg>
  <div class="a" style="left:3045px;top:959px;width:191px;height:98px;border:4.5px solid #f23b3b;border-radius:8px"></div>
  <div class="a" style="left:3057px;top:974px;width:163px;height:72px;border-radius:8px;background:#2662f6"></div>
  <div class="t" style="left:3086px;top:997.2px;font-size:26.7px;color:#fff">Add field</div>
  <div class="a" style="left:836px;top:1102px;width:2384px;height:720px;border:2px solid #ebedf0;border-radius:8px 8px 0 0;background:#fff;overflow:hidden"></div>
  <div class="a" style="left:838px;top:1104px;width:2380px;height:93px;background:#f5f6f8;border-radius:7px 7px 0 0"></div>
  <div class="a" style="left:838px;top:1197.0px;width:2358px;height:97.2px;background:#fff"></div>
  <div class="a" style="left:838px;top:1294.2px;width:2358px;height:97.2px;background:#fafafa"></div>
  <div class="a" style="left:838px;top:1391.4px;width:2358px;height:97.2px;background:#fff"></div>
  <div class="a" style="left:838px;top:1488.6px;width:2358px;height:97.2px;background:#fafafa"></div>
  <div class="a" style="left:838px;top:1585.8px;width:2358px;height:97.2px;background:#fff"></div>
  <div class="a" style="left:838px;top:1683.0px;width:2358px;height:97.2px;background:#fafafa"></div>
  <div class="a" style="left:838px;top:1780.2px;width:2358px;height:97.2px;background:#fff"></div>
  <div class="a" style="left:838px;top:1196.0px;width:2358px;height:2px;background:#e9ebee"></div>
  <div class="a" style="left:838px;top:1293.2px;width:2358px;height:2px;background:#e9ebee"></div>
  <div class="a" style="left:838px;top:1390.4px;width:2358px;height:2px;background:#e9ebee"></div>
  <div class="a" style="left:838px;top:1487.6px;width:2358px;height:2px;background:#e9ebee"></div>
  <div class="a" style="left:838px;top:1584.8px;width:2358px;height:2px;background:#e9ebee"></div>
  <div class="a" style="left:838px;top:1682.0px;width:2358px;height:2px;background:#e9ebee"></div>
  <div class="a" style="left:838px;top:1779.2px;width:2358px;height:2px;background:#e9ebee"></div>
  <div class="a" style="left:838px;top:1876.4px;width:2358px;height:2px;background:#e9ebee"></div>
  <div class="a" style="left:927px;top:1104px;width:1.5px;height:704px;background:#eceef1"></div>
  <div class="a" style="left:1021px;top:1104px;width:1.5px;height:704px;background:#eceef1"></div>
  <div class="a" style="left:1219px;top:1104px;width:1.5px;height:704px;background:#eceef1"></div>
  <div class="a" style="left:1454px;top:1104px;width:1.5px;height:704px;background:#eceef1"></div>
  <div class="a" style="left:1652px;top:1104px;width:1.5px;height:704px;background:#eceef1"></div>
  <div class="a" style="left:1787px;top:1104px;width:1.5px;height:704px;background:#eceef1"></div>
  <div class="a" style="left:1921px;top:1104px;width:1.5px;height:704px;background:#eceef1"></div>
  <div class="a" style="left:2057px;top:1104px;width:1.5px;height:704px;background:#eceef1"></div>
  <div class="a" style="left:2200px;top:1104px;width:1.5px;height:704px;background:#eceef1"></div>
  <div class="a" style="left:2327px;top:1104px;width:1.5px;height:704px;background:#eceef1"></div>
  <div class="a" style="left:2452px;top:1104px;width:1.5px;height:704px;background:#eceef1"></div>
  <div class="a" style="left:2579px;top:1104px;width:1.5px;height:704px;background:#eceef1"></div>
  <div class="a" style="left:2759px;top:1104px;width:1.5px;height:704px;background:#eceef1"></div>
  <div class="t" style="left:1046px;top:1136.5px;font-size:26px;color:#1f1f1f;letter-spacing:.3px;-webkit-text-stroke:.6px #1f1f1f">Field enco...</div>
  <div class="t" style="left:1243.6px;top:1136.5px;font-size:26px;color:#1f1f1f;letter-spacing:.3px;-webkit-text-stroke:.6px #1f1f1f">Field Name</div>
  <div class="t" style="left:1477.7px;top:1136.5px;font-size:26px;color:#1f1f1f;letter-spacing:.3px;-webkit-text-stroke:.6px #1f1f1f">Business t...</div>
  <div class="t" style="left:1675.4px;top:1136.5px;font-size:26px;color:#1f1f1f;letter-spacing:.3px;-webkit-text-stroke:.6px #1f1f1f">multi...</div>
  <div class="t" style="left:1810.7px;top:1136.5px;font-size:26px;color:#1f1f1f;letter-spacing:.3px;-webkit-text-stroke:.6px #1f1f1f">index</div>
  <div class="t" style="left:1945px;top:1136.5px;font-size:26px;color:#1f1f1f;letter-spacing:.3px;-webkit-text-stroke:.6px #1f1f1f">only</div>
  <div class="t" style="left:2080px;top:1136.5px;font-size:26px;color:#1f1f1f;letter-spacing:.3px;-webkit-text-stroke:.6px #1f1f1f">length</div>
  <div class="t" style="left:2224.8px;top:1136.5px;font-size:26px;color:#1f1f1f;letter-spacing:.3px;-webkit-text-stroke:.6px #1f1f1f">Max...</div>
  <div class="t" style="left:2350px;top:1136.5px;font-size:26px;color:#1f1f1f;letter-spacing:.3px;-webkit-text-stroke:.6px #1f1f1f">Max...</div>
  <div class="t" style="left:2476px;top:1136.5px;font-size:26px;color:#1f1f1f;letter-spacing:.3px;-webkit-text-stroke:.6px #1f1f1f">acc...</div>
  <div class="t" style="left:2602.5px;top:1136.5px;font-size:26px;color:#1f1f1f;letter-spacing:.3px;-webkit-text-stroke:.6px #1f1f1f">default v...</div>
  <div class="t" style="left:2782.5px;top:1136.5px;font-size:26px;color:#1f1f1f;letter-spacing:.3px;-webkit-text-stroke:.6px #1f1f1f">Data encoding</div>
  <div class="a" style="left:865px;top:1138px;width:26px;height:26px;border:2.5px solid #e2e5ee;border-radius:5px;background:#fff"></div>
  <div class="a" style="left:868px;top:1235.6px;width:26px;height:26px;border:2.5px solid #e2e5ee;border-radius:5px;background:#fff"></div>
  <svg class="a" style="left:962px;top:1234.6px" width="15" height="24" viewBox="0 0 15 24"><path d="M1.5 1.5l11 10.5-11 10.5" fill="none" stroke="#8a8c90" stroke-width="2.6"/></svg>
  <div class="t" style="left:1046.5px;top:1234.6px;font-size:26px;color:#4a4a4a;">id</div>
  <div class="a" style="left:1243px;top:1234.6px;width:25px;height:25px;border-radius:7px;background:#5cbd8b;color:#fff;font-size:18px;line-height:25px;text-align:center">低</div>
  <svg class="a" style="left:1277.5px;top:1234.6px" width="26" height="26" viewBox="0 0 26 26"><rect x="1.2" y="1.2" width="23.6" height="23.6" rx="2.5" fill="none" stroke="#2662f6" stroke-width="2.2"/><path d="M1.5 9.3h23M1.5 16.8h23" stroke="#2662f6" stroke-width="2"/><path d="M5 5.2h4M5 13h4M5 20.8h4" stroke="#2662f6" stroke-width="1.8"/></svg>
  <div class="t" style="left:1314px;top:1234.6px;font-size:26px;color:#4a4a4a;">ID</div>
  <svg class="a" style="left:1477px;top:1234.6px" width="26" height="26" viewBox="0 0 26 26"><path d="M18.6 1.3H4.6A3.3 3.3 0 0 0 1.3 4.6V20.3A3.3 3.3 0 0 0 4.6 23.6H20.6A3.3 3.3 0 0 0 23.9 20.3V15.8" fill="none" stroke="#555" stroke-width="2.3" stroke-linecap="round"/><text x="0" y="0" transform="translate(4.2 18) scale(.66 1)" font-family="Liberation Sans" font-weight="bold" font-size="15.2" fill="#555" text-rendering="geometricPrecision" letter-spacing="-.3">123</text></svg>
  <div class="t" style="left:1510px;top:1234.6px;font-size:26px;color:#4a4a4a">text</div>
  <div class="a" style="left:1675px;top:1225.1px;width:79px;height:43px;border-radius:21.5px;background:#e3e3e3"></div><div class="a" style="left:1678.5px;top:1230.1px;width:32.5px;height:32.5px;border-radius:50%;background:#fff;box-shadow:1px 2px 4px rgba(0,0,0,.12)"></div>
  <div class="a" style="left:1810px;top:1225.1px;width:79px;height:43px;border-radius:21.5px;background:#a7bff7"></div><div class="a" style="left:1853.0px;top:1230.1px;width:32.5px;height:32.5px;border-radius:50%;background:#fff;box-shadow:1px 2px 4px rgba(0,0,0,.12)"></div>
  <div class="a" style="left:1945px;top:1225.1px;width:79px;height:43px;border-radius:21.5px;background:#a7bff7"></div><div class="a" style="left:1988.0px;top:1230.1px;width:32.5px;height:32.5px;border-radius:50%;background:#fff;box-shadow:1px 2px 4px rgba(0,0,0,.12)"></div>
  <div class="t" style="left:2081px;top:1234.6px;font-size:26px;color:#4a4a4a;letter-spacing:.5px">20</div>
  <div class="a" style="left:2783.5px;top:1247.1px;width:9px;height:3px;background:#444"></div>
  <div class="a" style="left:868px;top:1332.8px;width:26px;height:26px;border:2.5px solid #e2e5ee;border-radius:5px;background:#fff"></div>
  <svg class="a" style="left:962px;top:1331.8px" width="15" height="24" viewBox="0 0 15 24"><path d="M1.5 1.5l11 10.5-11 10.5" fill="none" stroke="#8a8c90" stroke-width="2.6"/></svg>
  <div class="t" style="left:1046.5px;top:1331.8px;font-size:26px;color:#4a4a4a;">code</div>
  <div class="a" style="left:1243px;top:1331.8px;width:25px;height:25px;border-radius:7px;background:#5cbd8b;color:#fff;font-size:18px;line-height:25px;text-align:center">低</div>
  <svg class="a" style="left:1277.5px;top:1331.8px" width="26" height="26" viewBox="0 0 26 26"><rect x="1.2" y="1.2" width="23.6" height="23.6" rx="2.5" fill="none" stroke="#2662f6" stroke-width="2.2"/><path d="M1.5 9.3h23M1.5 16.8h23" stroke="#2662f6" stroke-width="2"/><path d="M5 5.2h4M5 13h4M5 20.8h4" stroke="#2662f6" stroke-width="1.8"/></svg>
  <div class="t" style="left:1314px;top:1331.8px;font-size:26px;color:#4a4a4a;">coding</div>
  <svg class="a" style="left:1476px;top:1331.8px" width="30" height="28" viewBox="0 0 30 28"><text x="0.3" y="25.9" font-family="Liberation Serif" font-weight="bold" font-size="37" fill="#555" text-rendering="geometricPrecision">T</text><text x="17.6" y="25.9" font-family="Liberation Serif" font-weight="bold" font-size="15.5" fill="#555" text-rendering="geometricPrecision">T</text></svg>
  <div class="t" style="left:1513px;top:1331.8px;font-size:26px;color:#4a4a4a">text</div>
  <div class="a" style="left:1675px;top:1322.3px;width:79px;height:43px;border-radius:21.5px;background:#e3e3e3"></div><div class="a" style="left:1678.5px;top:1327.3px;width:32.5px;height:32.5px;border-radius:50%;background:#fff;box-shadow:1px 2px 4px rgba(0,0,0,.12)"></div>
  <div class="a" style="left:1810px;top:1322.3px;width:79px;height:43px;border-radius:21.5px;background:#a7bff7"></div><div class="a" style="left:1853.0px;top:1327.3px;width:32.5px;height:32.5px;border-radius:50%;background:#fff;box-shadow:1px 2px 4px rgba(0,0,0,.12)"></div>
  <div class="a" style="left:1945px;top:1322.3px;width:79px;height:43px;border-radius:21.5px;background:#a7bff7"></div><div class="a" style="left:1988.0px;top:1327.3px;width:32.5px;height:32.5px;border-radius:50%;background:#fff;box-shadow:1px 2px 4px rgba(0,0,0,.12)"></div>
  <div class="t" style="left:2081px;top:1331.8px;font-size:26px;color:#4a4a4a;letter-spacing:.5px">128</div>
  <div class="a" style="left:2783.5px;top:1344.3px;width:9px;height:3px;background:#444"></div>
  <div class="a" style="left:868px;top:1430.0px;width:26px;height:26px;border:2.5px solid #e2e5ee;border-radius:5px;background:#fff"></div>
  <svg class="a" style="left:962px;top:1429.0px" width="15" height="24" viewBox="0 0 15 24"><path d="M1.5 1.5l11 10.5-11 10.5" fill="none" stroke="#8a8c90" stroke-width="2.6"/></svg>
  <div class="t" style="left:1046.5px;top:1429.0px;font-size:26px;color:#4a4a4a;">name</div>
  <div class="a" style="left:1243px;top:1429.0px;width:25px;height:25px;border-radius:7px;background:#5cbd8b;color:#fff;font-size:18px;line-height:25px;text-align:center">低</div>
  <svg class="a" style="left:1277.5px;top:1429.0px" width="26" height="26" viewBox="0 0 26 26"><rect x="1.2" y="1.2" width="23.6" height="23.6" rx="2.5" fill="none" stroke="#2662f6" stroke-width="2.2"/><path d="M1.5 9.3h23M1.5 16.8h23" stroke="#2662f6" stroke-width="2"/><path d="M5 5.2h4M5 13h4M5 20.8h4" stroke="#2662f6" stroke-width="1.8"/></svg>
  <div class="t" style="left:1314px;top:1429.0px;font-size:26px;color:#4a4a4a;">name</div>
  <svg class="a" style="left:1476px;top:1429.0px" width="30" height="28" viewBox="0 0 30 28"><text x="0.3" y="25.9" font-family="Liberation Serif" font-weight="bold" font-size="37" fill="#555" text-rendering="geometricPrecision">T</text><text x="17.6" y="25.9" font-family="Liberation Serif" font-weight="bold" font-size="15.5" fill="#555" text-rendering="geometricPrecision">T</text></svg>
  <div class="t" style="left:1513px;top:1429.0px;font-size:26px;color:#4a4a4a">integer</div>
  <div class="a" style="left:1675px;top:1419.5px;width:79px;height:43px;border-radius:21.5px;background:#e3e3e3"></div><div class="a" style="left:1678.5px;top:1424.5px;width:32.5px;height:32.5px;border-radius:50%;background:#fff;box-shadow:1px 2px 4px rgba(0,0,0,.12)"></div>
  <div class="a" style="left:1810px;top:1419.5px;width:79px;height:43px;border-radius:21.5px;background:#e3e3e3"></div><div class="a" style="left:1813.5px;top:1424.5px;width:32.5px;height:32.5px;border-radius:50%;background:#fff;box-shadow:1px 2px 4px rgba(0,0,0,.12)"></div>
  <div class="a" style="left:1945px;top:1419.5px;width:79px;height:43px;border-radius:21.5px;background:#e3e3e3"></div><div class="a" style="left:1948.5px;top:1424.5px;width:32.5px;height:32.5px;border-radius:50%;background:#fff;box-shadow:1px 2px 4px rgba(0,0,0,.12)"></div>
  <div class="t" style="left:2081px;top:1429.0px;font-size:26px;color:#4a4a4a;letter-spacing:.5px">128</div>
  <div class="a" style="left:2783.5px;top:1441.5px;width:9px;height:3px;background:#444"></div>
  <div class="a" style="left:868px;top:1527.2px;width:26px;height:26px;border:2.5px solid #e2e5ee;border-radius:5px;background:#fff"></div>
  <svg class="a" style="left:962px;top:1526.2px" width="15" height="24" viewBox="0 0 15 24"><path d="M1.5 1.5l11 10.5-11 10.5" fill="none" stroke="#8a8c90" stroke-width="2.6"/></svg>
  <div class="t" style="left:1046.5px;top:1526.2px;font-size:26px;color:#4a4a4a;letter-spacing:.6px;">field00030</div>
  <div class="a" style="left:1243px;top:1526.2px;width:25px;height:25px;border-radius:7px;background:#2662f6;color:#fff;font-size:18px;line-height:25px;text-align:center">无</div>
  <svg class="a" style="left:1277.5px;top:1526.2px" width="26" height="26" viewBox="0 0 26 26"><rect x="1.2" y="1.2" width="23.6" height="23.6" rx="2.5" fill="none" stroke="#2662f6" stroke-width="2.2"/><path d="M1.5 9.3h23M1.5 16.8h23" stroke="#2662f6" stroke-width="2"/><path d="M5 5.2h4M5 13h4M5 20.8h4" stroke="#2662f6" stroke-width="1.8"/></svg>
  <div class="t" style="left:1314px;top:1526.2px;font-size:26px;color:#4a4a4a;text-decoration:line-through;text-decoration-thickness:2px;">picture</div>
  <svg class="a" style="left:1476px;top:1526.2px" width="30" height="28" viewBox="0 0 30 28"><text x="0.3" y="25.9" font-family="Liberation Serif" font-weight="bold" font-size="37" fill="#555" text-rendering="geometricPrecision">T</text><text x="17.6" y="25.9" font-family="Liberation Serif" font-weight="bold" font-size="15.5" fill="#555" text-rendering="geometricPrecision">T</text></svg>
  <div class="t" style="left:1513px;top:1526.2px;font-size:26px;color:#4a4a4a">text</div>
  <div class="a" style="left:1675px;top:1516.7px;width:79px;height:43px;border-radius:21.5px;background:#e3e3e3"></div><div class="a" style="left:1678.5px;top:1521.7px;width:32.5px;height:32.5px;border-radius:50%;background:#fff;box-shadow:1px 2px 4px rgba(0,0,0,.12)"></div>
  <div class="a" style="left:1810px;top:1516.7px;width:79px;height:43px;border-radius:21.5px;background:#e3e3e3"></div><div class="a" style="left:1813.5px;top:1521.7px;width:32.5px;height:32.5px;border-radius:50%;background:#fff;box-shadow:1px 2px 4px rgba(0,0,0,.12)"></div>
  <div class="a" style="left:1945px;top:1516.7px;width:79px;height:43px;border-radius:21.5px;background:#e3e3e3"></div><div class="a" style="left:1948.5px;top:1521.7px;width:32.5px;height:32.5px;border-radius:50%;background:#fff;box-shadow:1px 2px 4px rgba(0,0,0,.12)"></div>
  <div class="t" style="left:2081px;top:1526.2px;font-size:26px;color:#4a4a4a;letter-spacing:.5px">128</div>
  <div class="a" style="left:2783.5px;top:1538.7px;width:9px;height:3px;background:#444"></div>
  <div class="a" style="left:868px;top:1624.4px;width:26px;height:26px;border:2.5px solid #e2e5ee;border-radius:5px;background:#fff"></div>
  <svg class="a" style="left:962px;top:1623.4px" width="15" height="24" viewBox="0 0 15 24"><path d="M1.5 1.5l11 10.5-11 10.5" fill="none" stroke="#8a8c90" stroke-width="2.6"/></svg>
  <div class="t" style="left:1046.5px;top:1623.4px;font-size:26px;color:#4a4a4a;letter-spacing:.6px;">field00024</div>
  <div class="a" style="left:1243px;top:1623.4px;width:25px;height:25px;border-radius:7px;background:#2662f6;color:#fff;font-size:18px;line-height:25px;text-align:center">无</div>
  <svg class="a" style="left:1277.5px;top:1623.4px" width="26" height="26" viewBox="0 0 26 26"><rect x="1.2" y="1.2" width="23.6" height="23.6" rx="2.5" fill="none" stroke="#2662f6" stroke-width="2.2"/><path d="M1.5 9.3h23M1.5 16.8h23" stroke="#2662f6" stroke-width="2"/><path d="M5 5.2h4M5 13h4M5 20.8h4" stroke="#2662f6" stroke-width="1.8"/></svg>
  <div class="t" style="left:1314px;top:1623.4px;font-size:26px;color:#4a4a4a;text-decoration:line-through;text-decoration-thickness:2px;">integer</div>
  <svg class="a" style="left:1477px;top:1623.4px" width="26" height="26" viewBox="0 0 26 26"><path d="M18.6 1.3H4.6A3.3 3.3 0 0 0 1.3 4.6V20.3A3.3 3.3 0 0 0 4.6 23.6H20.6A3.3 3.3 0 0 0 23.9 20.3V15.8" fill="none" stroke="#555" stroke-width="2.3" stroke-linecap="round"/><text x="0" y="0" transform="translate(4.2 18) scale(.66 1)" font-family="Liberation Sans" font-weight="bold" font-size="15.2" fill="#555" text-rendering="geometricPrecision" letter-spacing="-.3">123</text></svg>
  <div class="t" style="left:1510px;top:1623.4px;font-size:26px;color:#4a4a4a">integer</div>
  <div class="a" style="left:1675px;top:1613.9px;width:79px;height:43px;border-radius:21.5px;background:#e3e3e3"></div><div class="a" style="left:1678.5px;top:1618.9px;width:32.5px;height:32.5px;border-radius:50%;background:#fff;box-shadow:1px 2px 4px rgba(0,0,0,.12)"></div>
  <div class="a" style="left:1810px;top:1613.9px;width:79px;height:43px;border-radius:21.5px;background:#e3e3e3"></div><div class="a" style="left:1813.5px;top:1618.9px;width:32.5px;height:32.5px;border-radius:50%;background:#fff;box-shadow:1px 2px 4px rgba(0,0,0,.12)"></div>
  <div class="a" style="left:1945px;top:1613.9px;width:79px;height:43px;border-radius:21.5px;background:#e3e3e3"></div><div class="a" style="left:1948.5px;top:1618.9px;width:32.5px;height:32.5px;border-radius:50%;background:#fff;box-shadow:1px 2px 4px rgba(0,0,0,.12)"></div>
  <div class="t" style="left:2081px;top:1623.4px;font-size:26px;color:#4a4a4a;letter-spacing:.5px">20</div>
  <div class="a" style="left:2783.5px;top:1635.9px;width:9px;height:3px;background:#444"></div>
  <div class="a" style="left:868px;top:1721.6px;width:26px;height:26px;border:2.5px solid #e2e5ee;border-radius:5px;background:#fff"></div>
  <svg class="a" style="left:962px;top:1720.6px" width="15" height="24" viewBox="0 0 15 24"><path d="M1.5 1.5l11 10.5-11 10.5" fill="none" stroke="#8a8c90" stroke-width="2.6"/></svg>
  <div class="t" style="left:1046.5px;top:1720.6px;font-size:26px;color:#4a4a4a;letter-spacing:.6px;">field00023</div>
  <div class="a" style="left:1243px;top:1720.6px;width:25px;height:25px;border-radius:7px;background:#2662f6;color:#fff;font-size:18px;line-height:25px;text-align:center">无</div>
  <svg class="a" style="left:1277.5px;top:1720.6px" width="26" height="26" viewBox="0 0 26 26"><rect x="1.2" y="1.2" width="23.6" height="23.6" rx="2.5" fill="none" stroke="#2662f6" stroke-width="2.2"/><path d="M1.5 9.3h23M1.5 16.8h23" stroke="#2662f6" stroke-width="2"/><path d="M5 5.2h4M5 13h4M5 20.8h4" stroke="#2662f6" stroke-width="1.8"/></svg>
  <div class="t" style="left:1314px;top:1720.6px;font-size:26px;color:#4a4a4a;text-decoration:line-through;text-decoration-thickness:2px;">Rich Text</div>
  <svg class="a" style="left:1476px;top:1720.6px" width="28" height="28" viewBox="0 0 28 28"><rect x="2" y="2" width="24" height="24" fill="#555"/><circle cx="2.2" cy="2.2" r="2" fill="#555"/><circle cx="25.8" cy="2.2" r="2" fill="#555"/><circle cx="2.2" cy="25.8" r="2" fill="#555"/><circle cx="25.8" cy="25.8" r="2" fill="#555"/><path d="M7 10V7.5h14V10M14 7.5V19.5M10.5 20h7" stroke="#fff" stroke-width="2.2" fill="none"/></svg>
  <div class="a" style="left:1510.5px;top:1700px;width:140.5px;height:60px;overflow:hidden"><div class="t" style="left:0;top:20.6px;font-size:26px;color:#4a4a4a">Many to One</div></div>
  <div class="a" style="left:1675px;top:1711.1px;width:79px;height:43px;border-radius:21.5px;background:#e3e3e3"></div><div class="a" style="left:1678.5px;top:1716.1px;width:32.5px;height:32.5px;border-radius:50%;background:#fff;box-shadow:1px 2px 4px rgba(0,0,0,.12)"></div>
  <div class="a" style="left:1810px;top:1711.1px;width:79px;height:43px;border-radius:21.5px;background:#e3e3e3"></div><div class="a" style="left:1813.5px;top:1716.1px;width:32.5px;height:32.5px;border-radius:50%;background:#fff;box-shadow:1px 2px 4px rgba(0,0,0,.12)"></div>
  <div class="a" style="left:1945px;top:1711.1px;width:79px;height:43px;border-radius:21.5px;background:#e3e3e3"></div><div class="a" style="left:1948.5px;top:1716.1px;width:32.5px;height:32.5px;border-radius:50%;background:#fff;box-shadow:1px 2px 4px rgba(0,0,0,.12)"></div>
  <div class="t" style="left:2081px;top:1720.6px;font-size:26px;color:#4a4a4a;letter-spacing:.5px">1024</div>
  <div class="a" style="left:2783.5px;top:1733.1px;width:9px;height:3px;background:#444"></div>
  <div class="a" style="left:2997px;top:1104px;width:20px;height:704px;background:linear-gradient(to right,rgba(0,0,0,0),rgba(0,0,0,.07))"></div>
  <div class="a" style="left:3017px;top:1104px;width:179px;height:93px;background:#f5f6f8"></div>
  <div class="t" style="left:3039.7px;top:1137.5px;font-size:26px;color:#1f1f1f;letter-spacing:.3px;-webkit-text-stroke:.6px #1f1f1f">operate</div>
  <div class="a" style="left:3017px;top:1198.0px;width:179px;height:96px;background:#fff"></div>
  <div class="a" style="left:3017px;top:1196.0px;width:179px;height:2px;background:#e9ebee"></div>
  <svg class="a" style="left:3068.8px;top:1223.8px" width="26" height="26" viewBox="0 0 26 26"><path d="M1.4 4H15.7M20.8 4H24.6M1.4 12.7H6.8M11.7 12.7H24.6M1.4 21.5H15.7M20.8 21.5H24.6" stroke="#2662f6" stroke-width="2.5" stroke-linecap="round"/><path d="M15.7 1.3V6.6M11.7 10V15.3M15.7 19V24.2" stroke="#2662f6" stroke-width="2.8" stroke-linecap="round"/></svg>
  <div class="a" style="left:3040px;top:1272.0px;width:133px;height:22px;background:#fafafa;border-top:2px solid #e8e8e8"></div>
  <div class="a" style="left:3046px;top:1278.0px;width:84px;height:12px;border-radius:6px;background:#bfbfbf"></div>
  <div class="a" style="left:3017px;top:1295.2px;width:179px;height:96px;background:#fafafa"></div>
  <div class="a" style="left:3017px;top:1293.2px;width:179px;height:2px;background:#e9ebee"></div>
  <svg class="a" style="left:3068.8px;top:1321.0px" width="26" height="26" viewBox="0 0 26 26"><path d="M1.4 4H15.7M20.8 4H24.6M1.4 12.7H6.8M11.7 12.7H24.6M1.4 21.5H15.7M20.8 21.5H24.6" stroke="#2662f6" stroke-width="2.5" stroke-linecap="round"/><path d="M15.7 1.3V6.6M11.7 10V15.3M15.7 19V24.2" stroke="#2662f6" stroke-width="2.8" stroke-linecap="round"/></svg>
  <div class="a" style="left:3040px;top:1369.2px;width:133px;height:22px;background:#fafafa;border-top:2px solid #e8e8e8"></div>
  <div class="a" style="left:3046px;top:1375.2px;width:84px;height:12px;border-radius:6px;background:#bfbfbf"></div>
  <div class="a" style="left:3017px;top:1392.4px;width:179px;height:96px;background:#fff"></div>
  <div class="a" style="left:3017px;top:1390.4px;width:179px;height:2px;background:#e9ebee"></div>
  <svg class="a" style="left:3068.8px;top:1418.2px" width="26" height="26" viewBox="0 0 26 26"><path d="M1.4 4H15.7M20.8 4H24.6M1.4 12.7H6.8M11.7 12.7H24.6M1.4 21.5H15.7M20.8 21.5H24.6" stroke="#2662f6" stroke-width="2.5" stroke-linecap="round"/><path d="M15.7 1.3V6.6M11.7 10V15.3M15.7 19V24.2" stroke="#2662f6" stroke-width="2.8" stroke-linecap="round"/></svg>
  <div class="a" style="left:3040px;top:1466.4px;width:133px;height:22px;background:#fafafa;border-top:2px solid #e8e8e8"></div>
  <div class="a" style="left:3046px;top:1472.4px;width:84px;height:12px;border-radius:6px;background:#bfbfbf"></div>
  <div class="a" style="left:3017px;top:1489.6px;width:179px;height:96px;background:#fafafa"></div>
  <div class="a" style="left:3017px;top:1487.6px;width:179px;height:2px;background:#e9ebee"></div>
  <svg class="a" style="left:3068.8px;top:1515.4px" width="26" height="26" viewBox="0 0 26 26"><path d="M1.4 4H15.7M20.8 4H24.6M1.4 12.7H6.8M11.7 12.7H24.6M1.4 21.5H15.7M20.8 21.5H24.6" stroke="#2662f6" stroke-width="2.5" stroke-linecap="round"/><path d="M15.7 1.3V6.6M11.7 10V15.3M15.7 19V24.2" stroke="#2662f6" stroke-width="2.8" stroke-linecap="round"/></svg>
  <div class="a" style="left:3040px;top:1563.6px;width:133px;height:22px;background:#fafafa;border-top:2px solid #e8e8e8"></div>
  <div class="a" style="left:3046px;top:1569.6px;width:84px;height:12px;border-radius:6px;background:#bfbfbf"></div>
  <div class="a" style="left:3017px;top:1586.8px;width:179px;height:96px;background:#fff"></div>
  <div class="a" style="left:3017px;top:1584.8px;width:179px;height:2px;background:#e9ebee"></div>
  <svg class="a" style="left:3068.8px;top:1612.6px" width="26" height="26" viewBox="0 0 26 26"><path d="M1.4 4H15.7M20.8 4H24.6M1.4 12.7H6.8M11.7 12.7H24.6M1.4 21.5H15.7M20.8 21.5H24.6" stroke="#2662f6" stroke-width="2.5" stroke-linecap="round"/><path d="M15.7 1.3V6.6M11.7 10V15.3M15.7 19V24.2" stroke="#2662f6" stroke-width="2.8" stroke-linecap="round"/></svg>
  <div class="a" style="left:3040px;top:1660.8px;width:133px;height:22px;background:#fafafa;border-top:2px solid #e8e8e8"></div>
  <div class="a" style="left:3046px;top:1666.8px;width:84px;height:12px;border-radius:6px;background:#bfbfbf"></div>
  <div class="a" style="left:3017px;top:1684.0px;width:179px;height:96px;background:#fafafa"></div>
  <div class="a" style="left:3017px;top:1682.0px;width:179px;height:2px;background:#e9ebee"></div>
  <svg class="a" style="left:3068.8px;top:1709.8px" width="26" height="26" viewBox="0 0 26 26"><path d="M1.4 4H15.7M20.8 4H24.6M1.4 12.7H6.8M11.7 12.7H24.6M1.4 21.5H15.7M20.8 21.5H24.6" stroke="#2662f6" stroke-width="2.5" stroke-linecap="round"/><path d="M15.7 1.3V6.6M11.7 10V15.3M15.7 19V24.2" stroke="#2662f6" stroke-width="2.8" stroke-linecap="round"/></svg>
  <div class="a" style="left:3040px;top:1758.0px;width:133px;height:22px;background:#fafafa;border-top:2px solid #e8e8e8"></div>
  <div class="a" style="left:3046px;top:1764.0px;width:84px;height:12px;border-radius:6px;background:#bfbfbf"></div>
  <div class="a" style="left:3017px;top:1781.2px;width:179px;height:96px;background:#fff"></div>
  <div class="a" style="left:3017px;top:1779.2px;width:179px;height:2px;background:#e9ebee"></div>
  <div class="a" style="left:3196px;top:1104px;width:1.5px;height:93px;background:#eceef1"></div>
  <div class="a" style="left:3197px;top:1198px;width:21px;height:620px;background:#fafafa;border-left:2px solid #ececec"></div>
  <div class="a" style="left:3205px;top:1205px;width:12px;height:260px;border-radius:6px;background:#c1c1c1"></div>
</div>

<!-- page scrollbar -->
<div class="a" style="left:3294px;top:86px;width:45px;height:1722px;background:#f0f4f9"></div><div class="a" style="left:3338px;top:86px;width:22px;height:1722px;background:#fafafa;border-left:2px solid #e6e6e6;border-right:2px solid #f0f0f0"></div>
<div class="a" style="left:3344px;top:92px;width:11.5px;height:1506px;border-radius:6px;background:#c1c1c1"></div>


<!-- FLOATING BUTTONS -->
<div class="a" style="left:3248px;top:1332.7px;width:86.5px;height:86.5px;border-radius:50%;background:rgba(80,82,88,.5);z-index:10"></div>
<svg class="a" style="left:3277.5px;top:1362px;z-index:11" width="28" height="28" viewBox="0 0 28 28"><rect x="1.2" y="1.2" width="25.6" height="25.6" rx="1.5" fill="none" stroke="#fff" stroke-width="2.4"/><rect x="7" y="6.5" width="3.2" height="16" fill="#fff"/><rect x="12.8" y="10.5" width="3.2" height="12" fill="#fff"/><rect x="18.6" y="14.5" width="3.2" height="8" fill="#fff"/></svg>
<div class="a" style="left:3248px;top:1455px;width:86.5px;height:86.5px;border-radius:50%;background:rgba(80,82,88,.5);z-index:10"></div>
<svg class="a" style="left:3270px;top:1474px;z-index:11" width="44" height="44" viewBox="0 0 44 44"><path d="M8.90 22.00A12.5 12.5 0 1 1 19.23 34.31" stroke="#fff" stroke-width="2.6" fill="none"/><path d="M36.82 10.92L33.82 20.42L26.82 14.92z" fill="#fff"/><path d="M16.2 19h10.4l-4 5v5l-2.4 -1.5v-3.5z" fill="#fff"/></svg>
<div class="a" style="left:3248px;top:1578.4px;width:86.5px;height:86.5px;border-radius:50%;background:rgba(80,82,88,.5);z-index:10"></div>
<svg class="a" style="left:3276px;top:1604px;z-index:11" width="30" height="34" viewBox="0 0 30 34"><rect x="0" y="0" width="30" height="3.5" fill="#fff"/><path d="M15 8l11 11h-7v12h-8V19H4z" fill="#fff"/></svg>
<div class="a" style="left:3230px;top:1501.8px;width:86.5px;height:86.5px;border-radius:50%;background:#fff;box-shadow:0 4px 18px rgba(0,0,0,.12);z-index:12"></div>
<svg class="a" style="left:3250px;top:1522px;z-index:13" width="40" height="40" viewBox="0 0 40 40"><circle cx="18.7" cy="18.4" r="11.3" fill="#555"/><path d="M18.7 18.4L35.3 34.4" stroke="#555" stroke-width="6.6" stroke-linecap="round"/><path d="M7 6.5l8.5 8.5" stroke="#fff" stroke-width="6"/></svg>

</body></html>
